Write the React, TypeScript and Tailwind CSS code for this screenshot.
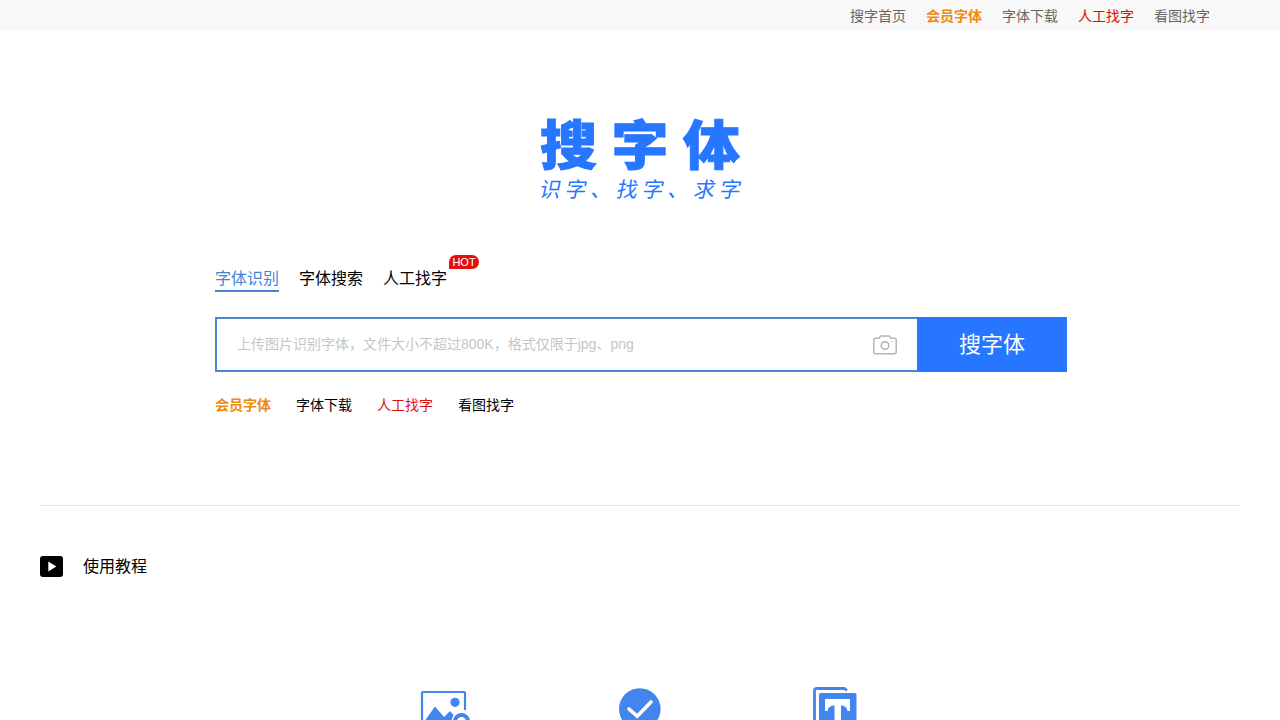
import React from "react";

interface NavItem {
  label: string;
  style?: string;
}

const topLinks: NavItem[] = [
  { label: "搜字首页" },
  { label: "会员字体", style: "font-bold text-[#ee8b10]" },
  { label: "字体下载" },
  { label: "人工找字", style: "text-[#dd0a0a]" },
  { label: "看图找字" },
];

const quickLinks: NavItem[] = [
  { label: "会员字体", style: "font-bold text-[#ee8b10]" },
  { label: "字体下载" },
  { label: "人工找字", style: "text-[#dd1010]" },
  { label: "看图找字" },
];

function TopBar() {
  return (
    <nav className="flex h-[30px] justify-end gap-5 bg-[#f8f8f8] pr-[70px] text-sm leading-[33px] text-[#666]">
      {topLinks.map((item) => (
        <a key={item.label} href="#" className={item.style}>
          {item.label}
        </a>
      ))}
    </nav>
  );
}

function Logo() {
  return (
    <div className="mx-auto mt-[90px] h-[85px] w-[200px] text-[#2676ff]">
      <h1 className="flex h-[56px] origin-top scale-y-[0.93] justify-between text-[57px] leading-[57px] font-black [-webkit-text-stroke:1px_#2676ff]">
        <span>搜</span>
        <span>字</span>
        <span>体</span>
      </h1>
      <p className="h-[28px] -skew-x-12 text-[21px] leading-[28px] tracking-[4.7px] whitespace-nowrap">
        识字、找字、求字
      </p>
    </div>
  );
}

function CameraIcon() {
  return (
    <svg width="24" height="20" viewBox="0 0 24 20" fill="none" stroke="#b4b4b4" strokeWidth="1.5">
      <path d="M2.2 3.3H5.6Q6.3 3.3 6.7 2.6L7.2 1.7Q7.6 1 8.4 1H15.6Q16.4 1 16.8 1.7L17.3 2.6Q17.7 3.3 18.4 3.3H21.8Q23.2 3.3 23.2 4.7V17.3Q23.2 18.7 21.8 18.7H2.2Q.8 18.7.8 17.3V4.7Q.8 3.3 2.2 3.3Z" />
      <circle cx="12" cy="10.5" r="3.8" />
      <path d="M18.4 6.3H19.6" strokeWidth="1.2" />
    </svg>
  );
}

function SearchPanel() {
  return (
    <section className="ml-[215px] w-[852px]">
      <div className="flex gap-5 text-base leading-[26px]">
        <a href="#" className="h-[26px] border-b-2 border-[#4285d8] text-[#4285d8]">
          字体识别
        </a>
        <a href="#">字体搜索</a>
        <a href="#" className="relative">
          人工找字
          <span className="absolute -top-[11px] left-[66px] h-[14px] w-[30px] rounded-[7px_7px_7px_0] bg-[#e20f0f] text-center text-[11px] leading-[15px] text-white">
            HOT
          </span>
        </a>
      </div>

      <div className="mt-[25px] flex h-[55px]">
        <div className="flex flex-1 items-center justify-between border-2 border-r-0 border-[#4987d3] pr-5 pl-5 text-sm text-[#c6c6c6]">
          <span className="pb-0.5">上传图片识别字体，文件大小不超过800K，格式仅限于jpg、png</span>
          <CameraIcon />
        </div>
        <button className="w-[150px] bg-[#2676ff] text-[22px] text-white">搜字体</button>
      </div>

      <div className="mt-[22px] mb-[89px] flex gap-[25px] text-sm leading-[22px]">
        {quickLinks.map((item) => (
          <a key={item.label} href="#" className={item.style}>
            {item.label}
          </a>
        ))}
      </div>
    </section>
  );
}

function PictureIcon() {
  return (
    <svg width="50" height="50" viewBox="0 0 50 50">
      <path d="M45 24V7Q45 6 44 6H3Q2 6 2 7V46H30" fill="none" stroke="#4285ed" strokeWidth="2.2" />
      <circle cx="35" cy="16.3" r="4.6" fill="#4285ed" />
      <path d="M4 36 15 20.5 24 31 30 25 35 31V44H4Z" fill="#4285ed" />
      <circle cx="41.5" cy="35.5" r="10" fill="#fff" />
      <circle cx="41.5" cy="35.5" r="6.5" fill="none" stroke="#4285ed" strokeWidth="4" />
    </svg>
  );
}

function CheckIcon() {
  return (
    <svg width="42" height="42" viewBox="0 0 42 42">
      <circle cx="20.8" cy="21" r="20.8" fill="#4285ed" />
      <path d="m10 21 8.2 7.2L32 14" fill="none" stroke="#fff" strokeWidth="3.6" strokeLinecap="round" />
    </svg>
  );
}

function FontIcon() {
  return (
    <svg width="44" height="48" viewBox="0 0 44 48" fill="#4285ed">
      <path d="M1.5 42V3.5Q1.5 1.5 3.5 1.5H31.5L34 3.5" fill="none" stroke="#4285ed" strokeWidth="2.8" />
      <rect x="6" y="6" width="37.5" height="41" rx="2" />
      <path d="M12 12H37V24H34.5Q33.5 18.5 28 18.5V41H21.5V18.5Q15.5 18.5 14.5 24H12Z" fill="#fff" />
    </svg>
  );
}

export default function App() {
  return (
    <div className="h-[720px] overflow-hidden bg-white font-['Liberation_Sans','Noto_Sans_CJK_SC',sans-serif] text-black">
      <TopBar />
      <Logo />
      <div className="h-[61px]" />
      <SearchPanel />

      <section className="mx-10 border-t border-[#e8e8e8] pt-[48px]">
        <h2 className="flex h-6 items-center gap-5 text-base leading-6">
          <svg width="23" height="21" viewBox="0 0 23 21">
            <rect width="23" height="21" rx="3" />
            <path d="M8.3 5.5 16.3 10.5 8.3 15.5Z" fill="#fff" />
          </svg>
          <span className="pt-0.5">使用教程</span>
        </h2>
      </section>

      <div className="mt-[107px] flex items-start pl-[420px]">
        <div className="pt-px">
          <PictureIcon />
        </div>
        <div className="ml-[149px] pt-[3px]">
          <CheckIcon />
        </div>
        <div className="ml-[152px] pt-[2px]">
          <FontIcon />
        </div>
      </div>
    </div>
  );
}
